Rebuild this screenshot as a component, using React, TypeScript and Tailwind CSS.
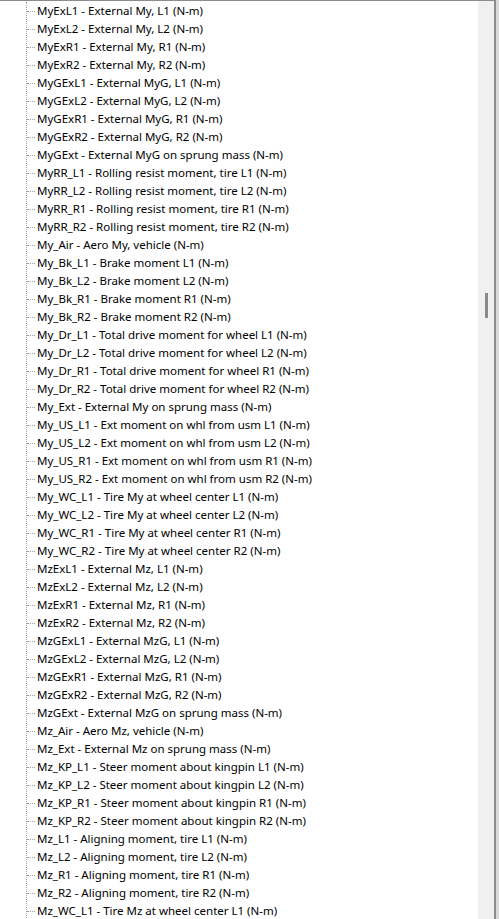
import React from 'react';

const ITEMS = [
  "MyExL1 - External My, L1 (N-m)",
  "MyExL2 - External My, L2 (N-m)",
  "MyExR1 - External My, R1 (N-m)",
  "MyExR2 - External My, R2 (N-m)",
  "MyGExL1 - External MyG, L1 (N-m)",
  "MyGExL2 - External MyG, L2 (N-m)",
  "MyGExR1 - External MyG, R1 (N-m)",
  "MyGExR2 - External MyG, R2 (N-m)",
  "MyGExt - External MyG on sprung mass (N-m)",
  "MyRR_L1 - Rolling resist moment, tire L1 (N-m)",
  "MyRR_L2 - Rolling resist moment, tire L2 (N-m)",
  "MyRR_R1 - Rolling resist moment, tire R1 (N-m)",
  "MyRR_R2 - Rolling resist moment, tire R2 (N-m)",
  "My_Air - Aero My, vehicle (N-m)",
  "My_Bk_L1 - Brake moment L1 (N-m)",
  "My_Bk_L2 - Brake moment L2 (N-m)",
  "My_Bk_R1 - Brake moment R1 (N-m)",
  "My_Bk_R2 - Brake moment R2 (N-m)",
  "My_Dr_L1 - Total drive moment for wheel L1 (N-m)",
  "My_Dr_L2 - Total drive moment for wheel L2 (N-m)",
  "My_Dr_R1 - Total drive moment for wheel R1 (N-m)",
  "My_Dr_R2 - Total drive moment for wheel R2 (N-m)",
  "My_Ext - External My on sprung mass (N-m)",
  "My_US_L1 - Ext moment on whl from usm L1 (N-m)",
  "My_US_L2 - Ext moment on whl from usm L2 (N-m)",
  "My_US_R1 - Ext moment on whl from usm R1 (N-m)",
  "My_US_R2 - Ext moment on whl from usm R2 (N-m)",
  "My_WC_L1 - Tire My at wheel center L1 (N-m)",
  "My_WC_L2 - Tire My at wheel center L2 (N-m)",
  "My_WC_R1 - Tire My at wheel center R1 (N-m)",
  "My_WC_R2 - Tire My at wheel center R2 (N-m)",
  "MzExL1 - External Mz, L1 (N-m)",
  "MzExL2 - External Mz, L2 (N-m)",
  "MzExR1 - External Mz, R1 (N-m)",
  "MzExR2 - External Mz, R2 (N-m)",
  "MzGExL1 - External MzG, L1 (N-m)",
  "MzGExL2 - External MzG, L2 (N-m)",
  "MzGExR1 - External MzG, R1 (N-m)",
  "MzGExR2 - External MzG, R2 (N-m)",
  "MzGExt - External MzG on sprung mass (N-m)",
  "Mz_Air - Aero Mz, vehicle (N-m)",
  "Mz_Ext - External Mz on sprung mass (N-m)",
  "Mz_KP_L1 - Steer moment about kingpin L1 (N-m)",
  "Mz_KP_L2 - Steer moment about kingpin L2 (N-m)",
  "Mz_KP_R1 - Steer moment about kingpin R1 (N-m)",
  "Mz_KP_R2 - Steer moment about kingpin R2 (N-m)",
  "Mz_L1 - Aligning moment, tire L1 (N-m)",
  "Mz_L2 - Aligning moment, tire L2 (N-m)",
  "Mz_R1 - Aligning moment, tire R1 (N-m)",
  "Mz_R2 - Aligning moment, tire R2 (N-m)",
  "Mz_WC_L1 - Tire Mz at wheel center L1 (N-m)",
];

export default function App() {
  return (
    <div className="flex w-[499px] h-[919px] overflow-hidden bg-white font-['Noto_Sans',sans-serif]">
      <div className="flex flex-1 border-t border-[#8c8c8c]">
        {/* tree */}
        <div className="flex-1 pt-[1px] pl-[26px] overflow-hidden">
          <div className="border-l border-dotted border-[#a0a0a0] min-h-[930px]">
            {ITEMS.map((item) => (
              <div key={item} className="flex items-center h-[18px]">
                <span className="w-[8px] border-t border-dotted border-[#a0a0a0] shrink-0" />
                <span className="ml-[2px] text-[11.5px] leading-[18px] text-black whitespace-nowrap">{item}</span>
              </div>
            ))}
          </div>
        </div>
        {/* scrollbar */}
        <div className="relative w-[16px] bg-[#f0f0f0]">
          <div className="absolute left-[7px] top-[292px] w-[3px] h-[25px] bg-[#8a8a8a]" />
        </div>
      </div>
      <div className="w-[2px] bg-[#8c8c8c]" />
      <div className="w-[3px] bg-[#d9d9d9]" />
    </div>
  );
}
